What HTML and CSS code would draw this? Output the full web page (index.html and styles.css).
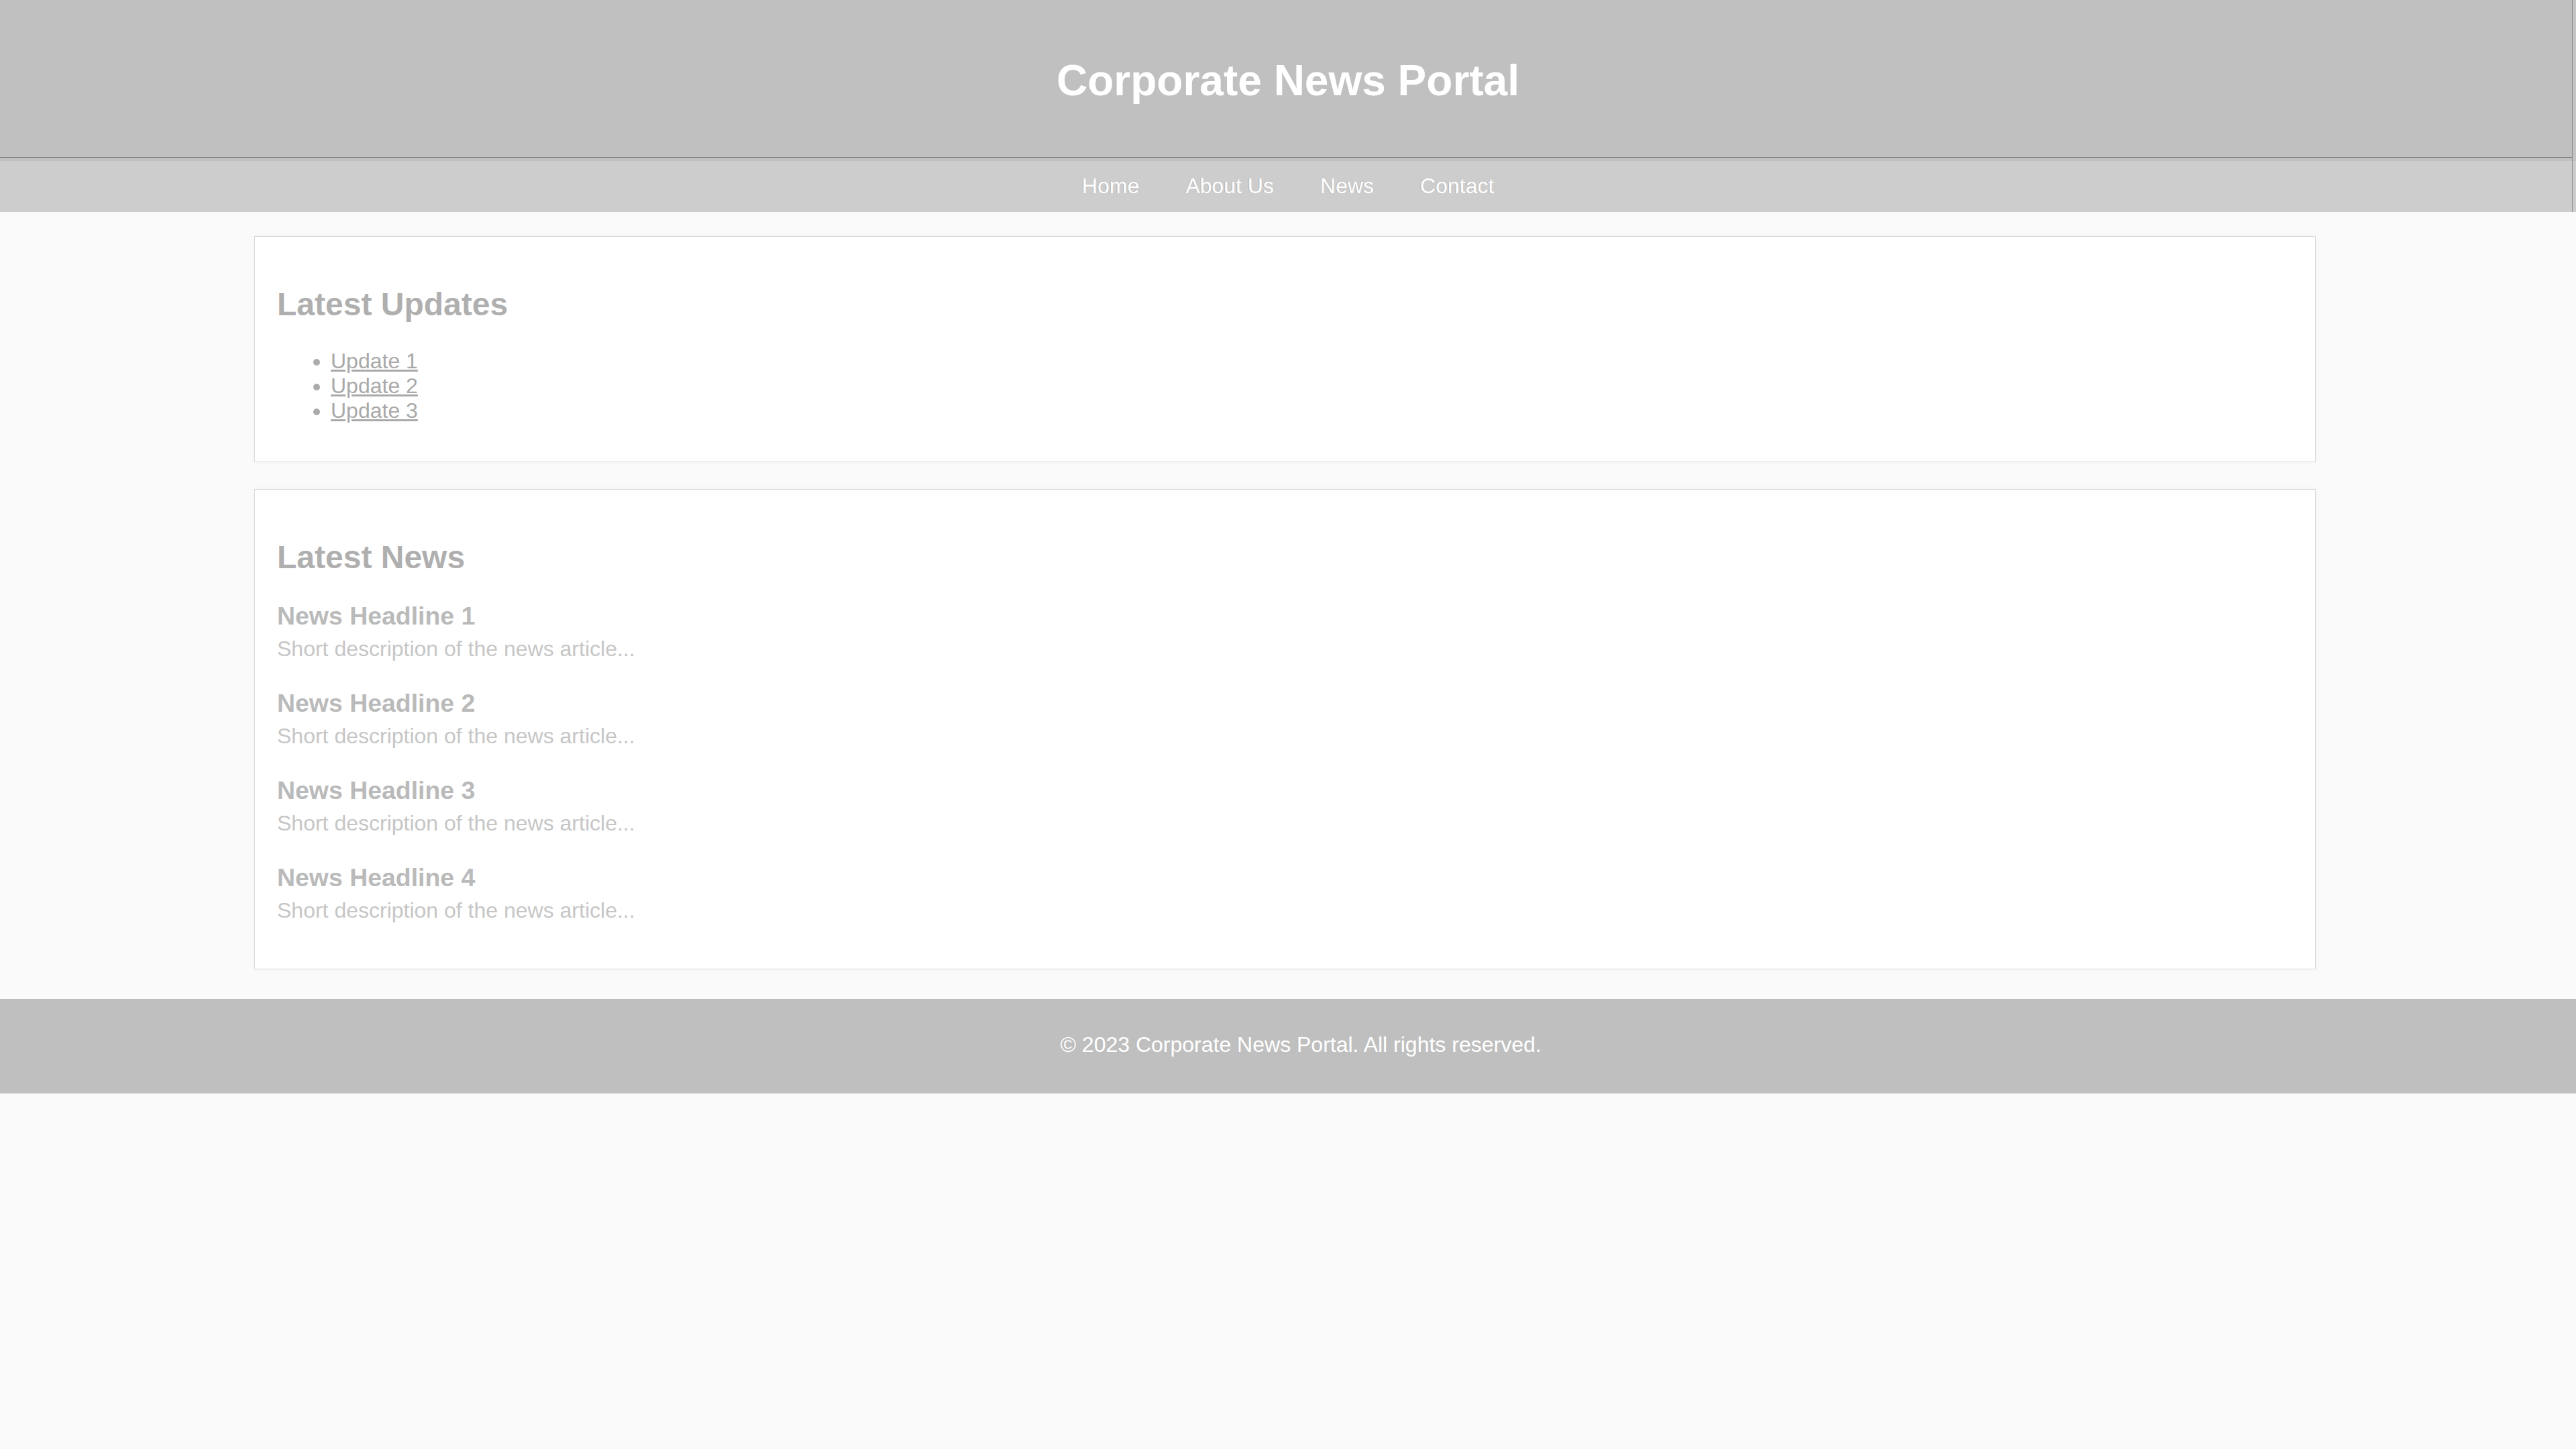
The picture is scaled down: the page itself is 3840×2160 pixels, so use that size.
FILE: index.html
```html
<!DOCTYPE html>
<html lang="en">
<head>
<meta charset="utf-8">
<title>Corporate News Portal</title>
<link rel="stylesheet" href="styles.css">
</head>
<body>
<header class="site-header">
  <h1 class="site-title">Corporate News Portal</h1>
</header>
<nav class="site-nav">
  <ul class="nav-list">
    <li><a class="nav-link" href="#">Home</a></li>
    <li><a class="nav-link" href="#">About Us</a></li>
    <li><a class="nav-link" href="#">News</a></li>
    <li><a class="nav-link" href="#">Contact</a></li>
  </ul>
</nav>
<main class="container">
  <section class="card">
    <h2 class="card-title">Latest Updates</h2>
    <ul class="updates">
      <li><a class="update-link" href="#">Update 1</a></li>
      <li><a class="update-link" href="#">Update 2</a></li>
      <li><a class="update-link" href="#">Update 3</a></li>
    </ul>
  </section>
  <section class="card">
    <h2 class="card-title">Latest News</h2>
    <article class="news-item">
      <h3 class="news-headline">News Headline 1</h3>
      <p class="news-desc">Short description of the news article...</p>
    </article>
    <article class="news-item">
      <h3 class="news-headline">News Headline 2</h3>
      <p class="news-desc">Short description of the news article...</p>
    </article>
    <article class="news-item">
      <h3 class="news-headline">News Headline 3</h3>
      <p class="news-desc">Short description of the news article...</p>
    </article>
    <article class="news-item">
      <h3 class="news-headline">News Headline 4</h3>
      <p class="news-desc">Short description of the news article...</p>
    </article>
  </section>
</main>
<footer class="site-footer">
  <p class="footer-text">&copy; 2023 Corporate News Portal. All rights reserved.</p>
</footer>
</body>
</html>
```
FILE: styles.css
```css
html, body {
  margin: 0;
  padding: 0;
}
body {
  background: #fafafa;
  font-family: "Liberation Sans", Arial, sans-serif;
  font-size: 32px;
  min-height: 2160px;
}
.site-header {
  background: #c0c0c0;
  height: 240px;
  box-sizing: border-box;
  padding: 83px 0;
  text-align: center;
  box-shadow: inset -5px 0 0 #c4c4c4, inset -6px 0 0 #8e8e8e,
              inset 0 -5px 0 #c0c0c0, inset 0 -6px 0 #707070;
}
.site-title {
  margin: 0;
  font-size: 64px;
  line-height: 74px;
  font-weight: bold;
  color: #ffffff;
}
.site-nav {
  background: #cdcdcd;
  height: 76px;
  box-sizing: border-box;
  padding: 19px 0 20px;
  box-shadow: inset -5px 0 0 #cdcdcd, inset -6px 0 0 #8e8e8e;
}
.nav-list {
  list-style: none;
  margin: 0;
  padding: 0;
  display: flex;
  justify-content: center;
  gap: 69px;
  line-height: 37px;
}
.nav-link {
  color: #ffffff;
  text-decoration: none;
  font-size: 32px;
  text-shadow: -1px 0 0 rgba(120, 120, 120, 0.35);
}
.container {
  width: 3073px;
  margin: 36px 0 44px 379px;
}
.card {
  background: #ffffff;
  border: 1px solid #d8d8d8;
  box-shadow: 0 0 8px rgba(0, 0, 0, 0.03);
  padding: 30px 33px;
  margin-bottom: 40px;
}
.card:last-child {
  margin-bottom: 0;
}
.card-title {
  margin: 43px 0 39px;
  font-size: 48px;
  line-height: 55px;
  font-weight: bold;
  color: #afafaf;
}
.updates {
  margin: 0 0 27px;
  padding-left: 80px;
  line-height: 37px;
  color: #ababab;
}
.update-link {
  color: #a9a9a9;
  text-decoration: underline;
}
.news-item {
  margin-bottom: 41px;
}
.news-item:last-child {
  margin-bottom: 38px;
}
.news-headline {
  margin: 0 0 9px;
  font-size: 37.44px;
  line-height: 43px;
  font-weight: bold;
  color: #bababa;
}
.news-desc {
  margin: 0;
  line-height: 37px;
  color: #c6c6c6;
}
.site-footer {
  background: #bfbfbf;
  height: 141px;
  box-sizing: border-box;
  padding: 50px 0 54px 38px;
  text-align: center;
}
.footer-text {
  margin: 0;
  line-height: 37px;
  color: #ffffff;
}
```
